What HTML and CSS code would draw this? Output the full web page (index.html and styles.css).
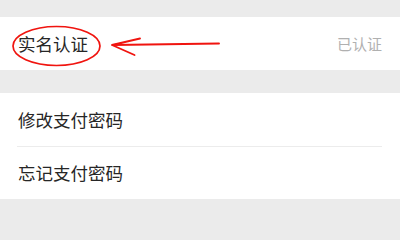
FILE: index.html
```html
<!DOCTYPE html>
<html lang="zh-CN">
<head>
<meta charset="utf-8">
<link rel="stylesheet" href="styles.css">
</head>
<body>
<div class="page">
  <div class="group first">
    <div class="row">
      <span class="label">实名认证</span>
      <span class="value">已认证</span>
    </div>
  </div>
  <div class="group">
    <div class="row">
      <span class="label">修改支付密码</span>
    </div>
    <div class="divider"></div>
    <div class="row">
      <span class="label">忘记支付密码</span>
    </div>
  </div>
  <svg class="annot" width="400" height="207" viewBox="0 0 400 207">
    <ellipse cx="56.5" cy="46" rx="43.5" ry="19.5" fill="none" stroke="#f0140f" stroke-width="1.7"/>
    <path d="M112 45 L140 38.5 M112 45 L134.5 55 M113 45 L219 43.5" fill="none" stroke="#f0140f" stroke-width="1.9" stroke-linecap="round"/>
  </svg>
</div>
</body>
</html>
```
FILE: styles.css
```css
html, body {
  margin: 0;
  padding: 0;
}
body {
  width: 400px;
  height: 207px;
  overflow: hidden;
  background: #ebebeb;
  font-family: "Noto Sans CJK SC", "Noto Sans", sans-serif;
}
.page {
  position: relative;
  padding-top: 17px;
  display: flex;
  flex-direction: column;
  gap: 23px;
}
.group {
  background: #ffffff;
  display: flex;
  flex-direction: column;
}
.row {
  height: 53px;
  padding: 0 18px 0 18px;
  display: flex;
  align-items: center;
  justify-content: space-between;
}
.divider {
  height: 1px;
  background: #ececec;
  margin: -0.5px 18px -0.5px 17px;
}
.label {
  font-size: 17.5px;
  color: #262626;
  line-height: 1;
}
.value {
  font-size: 15px;
  color: #b0b0b0;
  line-height: 1;
}
.annot {
  position: absolute;
  left: 0;
  top: 0;
  pointer-events: none;
}
```
